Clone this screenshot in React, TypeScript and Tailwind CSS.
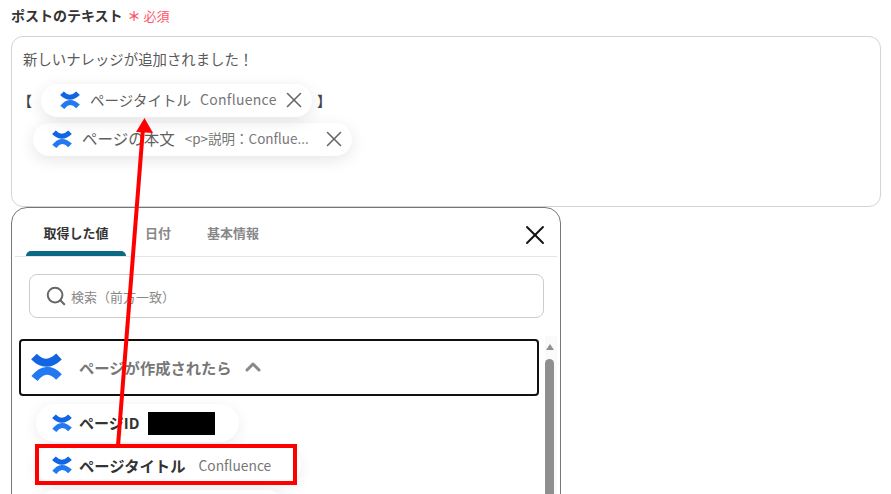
import { ChevronUp, Search, X } from 'lucide-react';

// Confluence mark: two opposing curved bands
function ConfluenceMark({ className }: { className: string }) {
  return (
    <svg viewBox="0 0 31 28" className={className} aria-hidden="true">
      <path d="M3 3.5 Q15 16 28 3.5" fill="none" stroke="#1265e2" strokeWidth="8" />
      <path d="M3.5 25.5 Q15 11 28 24" fill="none" stroke="#2279f2" strokeWidth="8" />
    </svg>
  );
}

function ValueChip({
  title,
  sub,
  className,
  titleClass,
  subClass,
}: {
  title: string;
  sub: string;
  className: string;
  titleClass: string;
  subClass: string;
}) {
  return (
    <div
      className={`flex h-[33px] items-center rounded-full bg-white pb-[2px] text-[#5f5f5f] shadow-[0_4px_16px_rgba(0,0,0,0.1)] ${className}`}
    >
      <ConfluenceMark className="h-[18px] w-5 shrink-0" />
      <span className={`ml-[10px] whitespace-nowrap ${titleClass}`}>{title}</span>
      <span className={`whitespace-nowrap text-[#777] ${subClass}`}>{sub}</span>
      <X className="ml-auto h-[26px] w-[26px] shrink-0 text-[#666]" strokeWidth={1.5} />
    </div>
  );
}

export default function App() {
  return (
    <div className="relative h-[494px] w-[891px] overflow-hidden bg-white pr-[10px] pl-[11px] font-['Noto_Sans_CJK_JP',sans-serif]">
      {/* ---- Label ---- */}
      <div className="flex h-[36px] items-start pt-[5px]">
        <span className="text-sm leading-[20px] font-bold text-[#333]">ポストのテキスト</span>
        <span className="ml-[5px] text-[13px] leading-[22px] text-[#ff5468]">
          <span className="font-bold">＊</span> 必須
        </span>
      </div>

      {/* ---- Post text field ---- */}
      <div className="h-[171px] rounded-xl border border-[#cfd3da] px-[11px] pt-[11px]">
        <p className="text-[14.4px] leading-[22px] text-[#5a5a5a]">新しいナレッジが追加されました！</p>
        <div className="mt-[14px] flex items-center">
          <span className="-ml-[5px] w-[23px] pb-[2px] text-sm font-bold text-[#444]">【</span>
          <ValueChip
            title="ページタイトル"
            sub="Confluence"
            className="w-[271px] pr-[5px] pl-[19px]"
            titleClass="text-[14.5px]"
            subClass="ml-[9px] text-[14px] tracking-[0.3px]"
          />
          <span className="ml-[5px] pb-[2px] text-sm font-bold text-[#444]">】</span>
        </div>
        <ValueChip
          title="ページの本文"
          sub="<p>説明：Conflue..."
          className="mt-[6px] ml-[10px] w-[319px] pr-[5px] pl-[19px]"
          titleClass="text-[15.5px]"
          subClass="ml-[10px] text-[13.5px]"
        />
      </div>

      {/* ---- Value picker popup ---- */}
      <div className="h-[320px] w-[550px] rounded-t-2xl border border-[#777] bg-white px-[3px]">
        <div className="flex h-[49px] items-end border-b border-[#e5e5e5] pl-[11px]">
          <div className="flex h-[48px] w-[100px] flex-col items-center justify-end">
            <span className="mb-[9px] text-[13px] font-bold text-[#333]">取得した値</span>
            <span className="h-[5px] w-full rounded-t-md bg-[#0a6a85]" />
          </div>
          <div className="mb-[14px] pl-[19px] text-[13px] font-bold text-[#888]">日付</div>
          <div className="mb-[14px] pl-[36px] text-[13px] font-bold text-[#888]">基本情報</div>
          <X className="mb-[5px] ml-auto mr-[6px] h-[32px] w-[32px] text-[#111]" strokeWidth={1.4} />
        </div>

        <div className="mt-[17px] ml-[14px] flex h-[44px] w-[515px] items-center rounded-lg border border-[#ccc] pl-[15px]">
          <Search className="h-[22px] w-[22px] text-[#666]" strokeWidth={2.2} />
          <span className="ml-[4px] pt-[2px] text-[13px] text-[#888]">検索（前方一致）</span>
        </div>

        <div className="mt-[18px] flex">
          <div className="w-[530px] pt-[3px] pl-[4px]">
            <div className="flex h-[57px] w-[520px] items-center rounded border-2 border-[#111] pb-[1px] pl-[10px]">
              <ConfluenceMark className="h-[28px] w-[31px]" />
              <span className="ml-[17px] text-[15.3px] font-bold text-[#777]">ページが作成されたら</span>
              <ChevronUp className="ml-[9px] h-6 w-6 text-[#888]" strokeWidth={3} />
            </div>
            <div className="mt-[8px] ml-[17px] flex h-[38px] w-[203px] items-center rounded-full bg-white pl-[16px] shadow-[0_3px_14px_rgba(0,0,0,0.08)]">
              <ConfluenceMark className="h-[18px] w-5" />
              <span className="ml-[7px] text-[15px] font-bold text-[#333]">ページID</span>
              <span className="ml-[9px] h-[23px] w-[67px] bg-black" />
            </div>
            <div className="mt-[4px] ml-[17px] flex h-[38px] w-[265px] items-center rounded-full bg-white pl-[16px] shadow-[0_3px_14px_rgba(0,0,0,0.08)]">
              <ConfluenceMark className="h-[18px] w-5" />
              <span className="ml-[7px] text-[15.3px] font-bold text-[#333]">ページタイトル</span>
              <span className="ml-[13px] text-[13.8px] text-[#777]">Confluence</span>
            </div>
            <div className="mt-[6px] ml-[17px] h-[38px] w-[250px] rounded-full bg-white shadow-[0_3px_14px_rgba(0,0,0,0.08)]" />
          </div>
          <div className="flex h-[170px] w-[12px] flex-col items-start bg-[#fafafa] pt-[8px]">
            <span className="ml-[1px] h-0 w-0 border-x-[4px] border-b-[6px] border-x-transparent border-b-[#909090]" />
            <span className="mt-[9px] h-[150px] w-[9px] rounded-t-full bg-[#8f8f8f]" />
          </div>
        </div>
      </div>

      {/* ---- Annotation overlays ---- */}
      <div className="absolute top-[444px] left-[35px] h-[41px] w-[262px] border-4 border-[#f00]" />
      <svg className="absolute top-0 left-0 h-[494px] w-[891px]" viewBox="0 0 891 494" aria-hidden="true">
        <line x1="118" y1="446" x2="143" y2="128" stroke="#f00" strokeWidth="4" />
        <path d="M144.5 118 L153 133 L136 132 Z" fill="#f00" />
      </svg>
    </div>
  );
}
